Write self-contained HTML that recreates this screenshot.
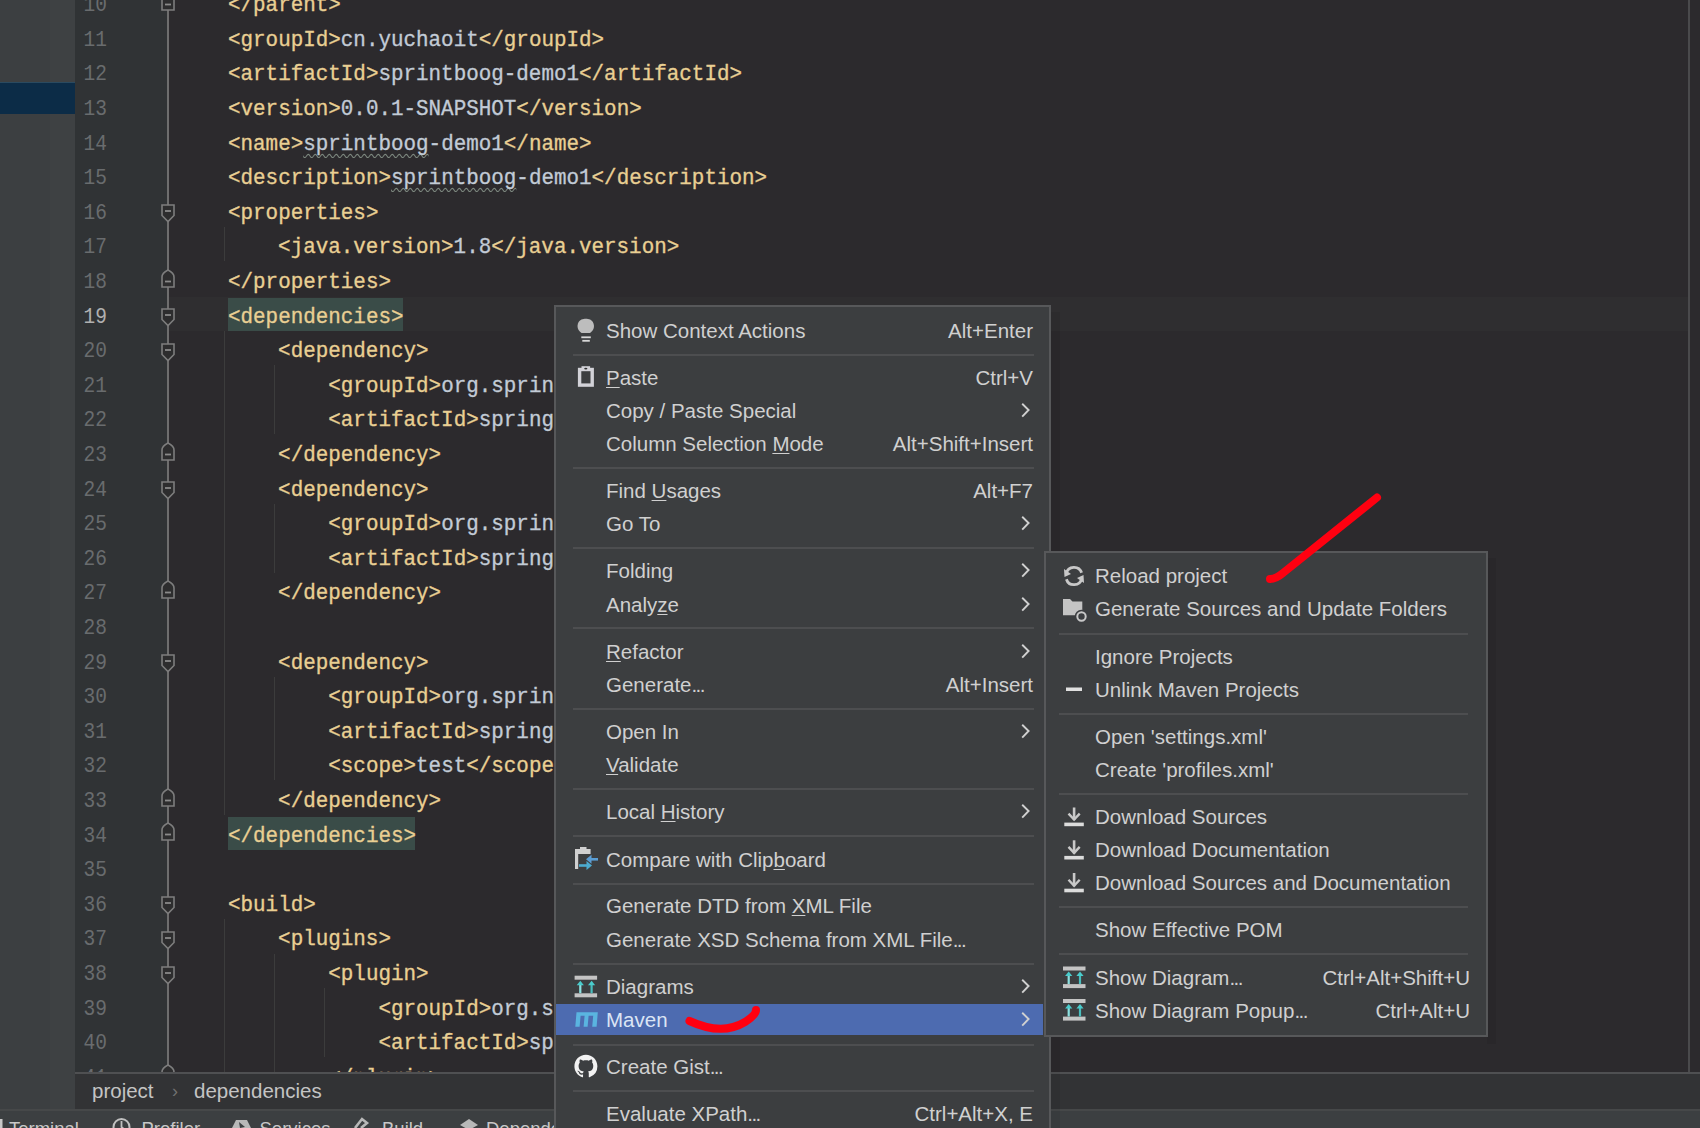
<!DOCTYPE html>
<html><head><meta charset="utf-8"><style>
*{margin:0;padding:0;box-sizing:border-box}
html,body{width:1700px;height:1128px;overflow:hidden;background:#2c2a2d}
body{position:relative;font-family:"Liberation Sans",sans-serif}
.abs{position:absolute}
.code{position:absolute;font-family:"Liberation Mono",monospace;font-size:20.9px;line-height:34.6px;height:34.6px;white-space:pre;transform:scaleY(1.07);transform-origin:0 22.86px}
.code{-webkit-text-stroke:0.3px currentColor}.t{color:#e9cf93}.v{color:#c2cbd6}.w{color:#c2cbd6;text-decoration:underline wavy #7d887f;text-decoration-thickness:1px;text-underline-offset:3px;text-decoration-skip-ink:none}
.ln{position:absolute;left:70px;width:37px;text-align:right;font-family:"Liberation Mono",monospace;font-size:19.5px;color:#606366;line-height:34.6px;height:34.6px;transform:scaleY(1.1);transform-origin:0 22.6px}
.menu{position:absolute;background:#3c3e41;border:2px solid #4f5052;}
.mi{position:absolute;left:0;right:0;height:33px;font-size:20.5px;color:#cfcfcf;line-height:33px}
.mi .tx{position:absolute;top:0}
.mi .sc{position:absolute;top:0;text-align:right}
.sep{position:absolute;height:2px;background:#4c4d4f}
.u{text-decoration:underline;text-underline-offset:2.2px;text-decoration-thickness:1.3px}
</style></head><body>

<div class="abs" style="left:0;top:0;width:75px;height:1128px;background:#3c3f41"></div>
<div class="abs" style="left:50px;top:0;width:25px;height:1110px;background:#3e4143"></div>
<div class="abs" style="left:0;top:81.5px;width:75px;height:32px;background:#0c2c47;border-top:1px solid #2a4a60"></div>
<div class="abs" style="left:75px;top:0;width:93px;height:1072px;background:#303335"></div>
<div class="abs" style="left:168px;top:296.9px;width:1521px;height:34px;background:#2f2e30"></div>
<div class="abs" style="left:1688px;top:0;width:2px;height:1072px;background:#4a4a4c"></div>
<div class="abs" style="left:167px;top:0;width:1.6px;height:1072px;background:#6e6e6e"></div>
<div class="abs" style="left:228px;top:298.1px;width:175px;height:33px;background:#3a4c48"></div>
<div class="abs" style="left:228px;top:817.1px;width:187px;height:33px;background:#3a4c48"></div>
<div class="abs" style="left:224px;top:226.9px;width:1px;height:34.6px;background:#3c3c3c"></div>
<div class="abs" style="left:224px;top:330.7px;width:1px;height:484.4px;background:#3c3c3c"></div>
<div class="abs" style="left:274px;top:365.3px;width:1px;height:69.2px;background:#3c3c3c"></div>
<div class="abs" style="left:274px;top:503.7px;width:1px;height:69.2px;background:#3c3c3c"></div>
<div class="abs" style="left:274px;top:676.7px;width:1px;height:103.8px;background:#3c3c3c"></div>
<div class="abs" style="left:224px;top:918.9px;width:1px;height:173.0px;background:#3c3c3c"></div>
<div class="abs" style="left:274px;top:953.5px;width:1px;height:138.4px;background:#3c3c3c"></div>
<div class="abs" style="left:324px;top:988.1px;width:1px;height:69.2px;background:#3c3c3c"></div>
<div class="ln" style="top:-10.8px;color:#696c6e">10</div>
<div class="ln" style="top:23.8px;color:#696c6e">11</div>
<div class="ln" style="top:58.4px;color:#696c6e">12</div>
<div class="ln" style="top:93.0px;color:#696c6e">13</div>
<div class="ln" style="top:127.6px;color:#696c6e">14</div>
<div class="ln" style="top:162.2px;color:#696c6e">15</div>
<div class="ln" style="top:196.8px;color:#696c6e">16</div>
<div class="ln" style="top:231.4px;color:#696c6e">17</div>
<div class="ln" style="top:266.0px;color:#696c6e">18</div>
<div class="ln" style="top:300.6px;color:#b0b0b0">19</div>
<div class="ln" style="top:335.2px;color:#696c6e">20</div>
<div class="ln" style="top:369.8px;color:#696c6e">21</div>
<div class="ln" style="top:404.4px;color:#696c6e">22</div>
<div class="ln" style="top:439.0px;color:#696c6e">23</div>
<div class="ln" style="top:473.6px;color:#696c6e">24</div>
<div class="ln" style="top:508.2px;color:#696c6e">25</div>
<div class="ln" style="top:542.8px;color:#696c6e">26</div>
<div class="ln" style="top:577.4px;color:#696c6e">27</div>
<div class="ln" style="top:612.0px;color:#696c6e">28</div>
<div class="ln" style="top:646.6px;color:#696c6e">29</div>
<div class="ln" style="top:681.2px;color:#696c6e">30</div>
<div class="ln" style="top:715.8px;color:#696c6e">31</div>
<div class="ln" style="top:750.4px;color:#696c6e">32</div>
<div class="ln" style="top:785.0px;color:#696c6e">33</div>
<div class="ln" style="top:819.6px;color:#696c6e">34</div>
<div class="ln" style="top:854.2px;color:#696c6e">35</div>
<div class="ln" style="top:888.8px;color:#696c6e">36</div>
<div class="ln" style="top:923.4px;color:#696c6e">37</div>
<div class="ln" style="top:958.0px;color:#696c6e">38</div>
<div class="ln" style="top:992.6px;color:#696c6e">39</div>
<div class="ln" style="top:1027.2px;color:#696c6e">40</div>
<div class="ln" style="top:1061.8px;color:#696c6e">41</div>
<svg class="abs" style="left:160px;top:204.3px" width="16" height="20" viewBox="0 0 16 20"><path d="M2 1 H14 V11.5 L8 17.5 L2 11.5 Z" fill="#2d2d2e" stroke="#7d7d7d" stroke-width="1.6"/><path d="M5 7 H11" stroke="#8a8a8a" stroke-width="1.8"/></svg>
<svg class="abs" style="left:160px;top:308.1px" width="16" height="20" viewBox="0 0 16 20"><path d="M2 1 H14 V11.5 L8 17.5 L2 11.5 Z" fill="#2d2d2e" stroke="#7d7d7d" stroke-width="1.6"/><path d="M5 7 H11" stroke="#8a8a8a" stroke-width="1.8"/></svg>
<svg class="abs" style="left:160px;top:342.7px" width="16" height="20" viewBox="0 0 16 20"><path d="M2 1 H14 V11.5 L8 17.5 L2 11.5 Z" fill="#2d2d2e" stroke="#7d7d7d" stroke-width="1.6"/><path d="M5 7 H11" stroke="#8a8a8a" stroke-width="1.8"/></svg>
<svg class="abs" style="left:160px;top:481.1px" width="16" height="20" viewBox="0 0 16 20"><path d="M2 1 H14 V11.5 L8 17.5 L2 11.5 Z" fill="#2d2d2e" stroke="#7d7d7d" stroke-width="1.6"/><path d="M5 7 H11" stroke="#8a8a8a" stroke-width="1.8"/></svg>
<svg class="abs" style="left:160px;top:654.1px" width="16" height="20" viewBox="0 0 16 20"><path d="M2 1 H14 V11.5 L8 17.5 L2 11.5 Z" fill="#2d2d2e" stroke="#7d7d7d" stroke-width="1.6"/><path d="M5 7 H11" stroke="#8a8a8a" stroke-width="1.8"/></svg>
<svg class="abs" style="left:160px;top:896.3px" width="16" height="20" viewBox="0 0 16 20"><path d="M2 1 H14 V11.5 L8 17.5 L2 11.5 Z" fill="#2d2d2e" stroke="#7d7d7d" stroke-width="1.6"/><path d="M5 7 H11" stroke="#8a8a8a" stroke-width="1.8"/></svg>
<svg class="abs" style="left:160px;top:930.9px" width="16" height="20" viewBox="0 0 16 20"><path d="M2 1 H14 V11.5 L8 17.5 L2 11.5 Z" fill="#2d2d2e" stroke="#7d7d7d" stroke-width="1.6"/><path d="M5 7 H11" stroke="#8a8a8a" stroke-width="1.8"/></svg>
<svg class="abs" style="left:160px;top:965.5px" width="16" height="20" viewBox="0 0 16 20"><path d="M2 1 H14 V11.5 L8 17.5 L2 11.5 Z" fill="#2d2d2e" stroke="#7d7d7d" stroke-width="1.6"/><path d="M5 7 H11" stroke="#8a8a8a" stroke-width="1.8"/></svg>
<svg class="abs" style="left:160px;top:-8.3px" width="16" height="20" viewBox="0 0 16 20"><path d="M2 18 H14 V8 Q14 4 8 1 Q2 4 2 8 Z" fill="#2d2d2e" stroke="#7d7d7d" stroke-width="1.6"/><path d="M5 12.5 H11" stroke="#8a8a8a" stroke-width="1.8"/></svg>
<svg class="abs" style="left:160px;top:268.5px" width="16" height="20" viewBox="0 0 16 20"><path d="M2 18 H14 V8 Q14 4 8 1 Q2 4 2 8 Z" fill="#2d2d2e" stroke="#7d7d7d" stroke-width="1.6"/><path d="M5 12.5 H11" stroke="#8a8a8a" stroke-width="1.8"/></svg>
<svg class="abs" style="left:160px;top:441.5px" width="16" height="20" viewBox="0 0 16 20"><path d="M2 18 H14 V8 Q14 4 8 1 Q2 4 2 8 Z" fill="#2d2d2e" stroke="#7d7d7d" stroke-width="1.6"/><path d="M5 12.5 H11" stroke="#8a8a8a" stroke-width="1.8"/></svg>
<svg class="abs" style="left:160px;top:579.9px" width="16" height="20" viewBox="0 0 16 20"><path d="M2 18 H14 V8 Q14 4 8 1 Q2 4 2 8 Z" fill="#2d2d2e" stroke="#7d7d7d" stroke-width="1.6"/><path d="M5 12.5 H11" stroke="#8a8a8a" stroke-width="1.8"/></svg>
<svg class="abs" style="left:160px;top:787.5px" width="16" height="20" viewBox="0 0 16 20"><path d="M2 18 H14 V8 Q14 4 8 1 Q2 4 2 8 Z" fill="#2d2d2e" stroke="#7d7d7d" stroke-width="1.6"/><path d="M5 12.5 H11" stroke="#8a8a8a" stroke-width="1.8"/></svg>
<svg class="abs" style="left:160px;top:822.1px" width="16" height="20" viewBox="0 0 16 20"><path d="M2 18 H14 V8 Q14 4 8 1 Q2 4 2 8 Z" fill="#2d2d2e" stroke="#7d7d7d" stroke-width="1.6"/><path d="M5 12.5 H11" stroke="#8a8a8a" stroke-width="1.8"/></svg>
<svg class="abs" style="left:160px;top:1064.3px" width="16" height="20" viewBox="0 0 16 20"><path d="M2 18 H14 V8 Q14 4 8 1 Q2 4 2 8 Z" fill="#2d2d2e" stroke="#7d7d7d" stroke-width="1.6"/><path d="M5 12.5 H11" stroke="#8a8a8a" stroke-width="1.8"/></svg>
<div class="code" style="left:228.0px;top:-10.9px"><span class="t">&lt;/parent&gt;</span></div>
<div class="code" style="left:228.0px;top:23.7px"><span class="t">&lt;groupId&gt;</span><span class="v">cn.yuchaoit</span><span class="t">&lt;/groupId&gt;</span></div>
<div class="code" style="left:228.0px;top:58.3px"><span class="t">&lt;artifactId&gt;</span><span class="v">sprintboog-demo1</span><span class="t">&lt;/artifactId&gt;</span></div>
<div class="code" style="left:228.0px;top:92.9px"><span class="t">&lt;version&gt;</span><span class="v">0.0.1-SNAPSHOT</span><span class="t">&lt;/version&gt;</span></div>
<div class="code" style="left:228.0px;top:127.5px"><span class="t">&lt;name&gt;</span><span class="w">sprintboog</span><span class="v">-demo1</span><span class="t">&lt;/name&gt;</span></div>
<div class="code" style="left:228.0px;top:162.1px"><span class="t">&lt;description&gt;</span><span class="w">sprintboog</span><span class="v">-demo1</span><span class="t">&lt;/description&gt;</span></div>
<div class="code" style="left:228.0px;top:196.7px"><span class="t">&lt;properties&gt;</span></div>
<div class="code" style="left:278.1px;top:231.3px"><span class="t">&lt;java.version&gt;</span><span class="v">1.8</span><span class="t">&lt;/java.version&gt;</span></div>
<div class="code" style="left:228.0px;top:265.9px"><span class="t">&lt;/properties&gt;</span></div>
<div class="code" style="left:228.0px;top:300.5px"><span class="t">&lt;dependencies&gt;</span></div>
<div class="code" style="left:278.1px;top:335.1px"><span class="t">&lt;dependency&gt;</span></div>
<div class="code" style="left:328.3px;top:369.7px"><span class="t">&lt;groupId&gt;</span><span class="v">org.springframework.boot</span><span class="t">&lt;/groupId&gt;</span></div>
<div class="code" style="left:328.3px;top:404.3px"><span class="t">&lt;artifactId&gt;</span><span class="v">spring-boot-starter-web</span><span class="t">&lt;/artifactId&gt;</span></div>
<div class="code" style="left:278.1px;top:438.9px"><span class="t">&lt;/dependency&gt;</span></div>
<div class="code" style="left:278.1px;top:473.5px"><span class="t">&lt;dependency&gt;</span></div>
<div class="code" style="left:328.3px;top:508.1px"><span class="t">&lt;groupId&gt;</span><span class="v">org.springframework.boot</span><span class="t">&lt;/groupId&gt;</span></div>
<div class="code" style="left:328.3px;top:542.7px"><span class="t">&lt;artifactId&gt;</span><span class="v">spring-boot-devtools</span><span class="t">&lt;/artifactId&gt;</span></div>
<div class="code" style="left:278.1px;top:577.3px"><span class="t">&lt;/dependency&gt;</span></div>
<div class="code" style="left:278.1px;top:646.5px"><span class="t">&lt;dependency&gt;</span></div>
<div class="code" style="left:328.3px;top:681.1px"><span class="t">&lt;groupId&gt;</span><span class="v">org.springframework.boot</span><span class="t">&lt;/groupId&gt;</span></div>
<div class="code" style="left:328.3px;top:715.7px"><span class="t">&lt;artifactId&gt;</span><span class="v">spring-boot-starter-test</span><span class="t">&lt;/artifactId&gt;</span></div>
<div class="code" style="left:328.3px;top:750.3px"><span class="t">&lt;scope&gt;</span><span class="v">test</span><span class="t">&lt;/scope&gt;</span></div>
<div class="code" style="left:278.1px;top:784.9px"><span class="t">&lt;/dependency&gt;</span></div>
<div class="code" style="left:228.0px;top:819.5px"><span class="t">&lt;/dependencies&gt;</span></div>
<div class="code" style="left:228.0px;top:888.7px"><span class="t">&lt;build&gt;</span></div>
<div class="code" style="left:278.1px;top:923.3px"><span class="t">&lt;plugins&gt;</span></div>
<div class="code" style="left:328.3px;top:957.9px"><span class="t">&lt;plugin&gt;</span></div>
<div class="code" style="left:378.4px;top:992.5px"><span class="t">&lt;groupId&gt;</span><span class="v">org.springframework.boot</span><span class="t">&lt;/groupId&gt;</span></div>
<div class="code" style="left:378.4px;top:1027.1px"><span class="t">&lt;artifactId&gt;</span><span class="v">spring-boot-maven-plugin</span><span class="t">&lt;/artifactId&gt;</span></div>
<div class="code" style="left:328.3px;top:1061.7px"><span class="t">&lt;/plugin&gt;</span></div>
<div class="abs" style="left:75px;top:1072px;width:1625px;height:38px;background:#323335;border-top:2px solid #4f5052"></div>
<div class="abs" style="left:92px;top:1074px;font-size:20.5px;line-height:34px;color:#c4c4c4">project</div>
<div class="abs" style="left:172px;top:1074px;font-size:18px;line-height:34px;color:#707070">&#8250;</div>
<div class="abs" style="left:194px;top:1074px;font-size:20.5px;line-height:34px;color:#c4c4c4">dependencies</div>
<div class="abs" style="left:0;top:1109px;width:1700px;height:19px;background:#3c3f41"></div>
<div class="abs" style="left:0;top:1109px;width:1700px;height:1.5px;background:#464849"></div>
<div class="abs" style="left:9.0px;top:1111.5px;height:33px;line-height:33px;font-size:18.5px;color:#c8c8c8;white-space:pre">Terminal</div>
<div class="abs" style="left:141.5px;top:1111.5px;height:33px;line-height:33px;font-size:18.5px;color:#c8c8c8;white-space:pre">Profiler</div>
<div class="abs" style="left:259.5px;top:1111.5px;height:33px;line-height:33px;font-size:18.5px;color:#c8c8c8;white-space:pre">Services</div>
<div class="abs" style="left:382.0px;top:1111.5px;height:33px;line-height:33px;font-size:18.5px;color:#c8c8c8;white-space:pre">Build</div>
<div class="abs" style="left:486.0px;top:1111.5px;height:33px;line-height:33px;font-size:18.5px;color:#c8c8c8;white-space:pre">Dependencies</div>
<svg class="abs" style="left:0;top:1100px" width="560" height="28"><rect x="0" y="19" width="2.5" height="9" fill="#c8c8c8"/><circle cx="121.5" cy="27" r="8" fill="none" stroke="#c0c0c0" stroke-width="2"/><path d="M121.5 21 V27 L125 30" fill="none" stroke="#c0c0c0" stroke-width="1.8"/><path d="M232 28 L236 20 H247 L251 28 Z" fill="#b8b8b8"/><path d="M239 22 L245 27 L240 28 Z" fill="#3c3f41"/><path d="M355 28 L362 19 L367 23 L361 28" fill="none" stroke="#b8b8b8" stroke-width="2.6"/><path d="M460 25 L469 19 L478 25 L469 30 Z" fill="#b8b8b8"/></svg>
<div class="menu" style="left:554px;top:305px;width:497px;height:900px"></div>
<div class="abs" style="left:1050px;top:312px;width:10px;height:816px;background:rgba(0,0,0,0.05)"></div>
<div class="abs" style="left:554px;top:305px;width:497px;height:823px;background:#3c3e40;border:2px solid #57585a;border-bottom:none"></div>
<div class="abs" style="left:556px;top:1004px;width:487px;height:31px;background:#4d6bb0"></div>
<div class="abs" style="left:606px;top:313.6px;height:33px;line-height:33px;font-size:20.5px;color:#d0d0d0;white-space:pre">Show Context Actions</div>
<div class="abs" style="left:633px;width:400px;text-align:right;top:313.6px;height:33px;line-height:33px;font-size:20.5px;color:#d0d0d0;white-space:pre">Alt+Enter</div>
<div class="abs" style="left:573px;top:353.5px;width:461px;height:2px;background:#4d4e50"></div>
<div class="abs" style="left:606px;top:360.6px;height:33px;line-height:33px;font-size:20.5px;color:#d0d0d0;white-space:pre"><span class="u">P</span>aste</div>
<div class="abs" style="left:633px;width:400px;text-align:right;top:360.6px;height:33px;line-height:33px;font-size:20.5px;color:#d0d0d0;white-space:pre">Ctrl+V</div>
<div class="abs" style="left:606px;top:393.6px;height:33px;line-height:33px;font-size:20.5px;color:#d0d0d0;white-space:pre">Copy / Paste Special</div>
<svg class="abs" style="left:1020.3px;top:401.6px" width="12" height="18" viewBox="0 0 12 18"><path d="M2.2 1.8 L8.6 8 L2.2 14.6" fill="none" stroke="#d0d0d0" stroke-width="1.9"/></svg>
<div class="abs" style="left:606px;top:426.6px;height:33px;line-height:33px;font-size:20.5px;color:#d0d0d0;white-space:pre">Column Selection <span class="u">M</span>ode</div>
<div class="abs" style="left:633px;width:400px;text-align:right;top:426.6px;height:33px;line-height:33px;font-size:20.5px;color:#d0d0d0;white-space:pre">Alt+Shift+Insert</div>
<div class="abs" style="left:573px;top:466.5px;width:461px;height:2px;background:#4d4e50"></div>
<div class="abs" style="left:606px;top:473.6px;height:33px;line-height:33px;font-size:20.5px;color:#d0d0d0;white-space:pre">Find <span class="u">U</span>sages</div>
<div class="abs" style="left:633px;width:400px;text-align:right;top:473.6px;height:33px;line-height:33px;font-size:20.5px;color:#d0d0d0;white-space:pre">Alt+F7</div>
<div class="abs" style="left:606px;top:506.6px;height:33px;line-height:33px;font-size:20.5px;color:#d0d0d0;white-space:pre">Go To</div>
<svg class="abs" style="left:1020.3px;top:514.6px" width="12" height="18" viewBox="0 0 12 18"><path d="M2.2 1.8 L8.6 8 L2.2 14.6" fill="none" stroke="#d0d0d0" stroke-width="1.9"/></svg>
<div class="abs" style="left:573px;top:546.5px;width:461px;height:2px;background:#4d4e50"></div>
<div class="abs" style="left:606px;top:553.6px;height:33px;line-height:33px;font-size:20.5px;color:#d0d0d0;white-space:pre">Folding</div>
<svg class="abs" style="left:1020.3px;top:561.6px" width="12" height="18" viewBox="0 0 12 18"><path d="M2.2 1.8 L8.6 8 L2.2 14.6" fill="none" stroke="#d0d0d0" stroke-width="1.9"/></svg>
<div class="abs" style="left:606px;top:587.6px;height:33px;line-height:33px;font-size:20.5px;color:#d0d0d0;white-space:pre">Analy<span class="u">z</span>e</div>
<svg class="abs" style="left:1020.3px;top:595.6px" width="12" height="18" viewBox="0 0 12 18"><path d="M2.2 1.8 L8.6 8 L2.2 14.6" fill="none" stroke="#d0d0d0" stroke-width="1.9"/></svg>
<div class="abs" style="left:573px;top:626.5px;width:461px;height:2px;background:#4d4e50"></div>
<div class="abs" style="left:606px;top:634.6px;height:33px;line-height:33px;font-size:20.5px;color:#d0d0d0;white-space:pre"><span class="u">R</span>efactor</div>
<svg class="abs" style="left:1020.3px;top:642.6px" width="12" height="18" viewBox="0 0 12 18"><path d="M2.2 1.8 L8.6 8 L2.2 14.6" fill="none" stroke="#d0d0d0" stroke-width="1.9"/></svg>
<div class="abs" style="left:606px;top:667.6px;height:33px;line-height:33px;font-size:20.5px;color:#d0d0d0;white-space:pre">Generate<span style="letter-spacing:-1.6px">..</span>.</div>
<div class="abs" style="left:633px;width:400px;text-align:right;top:667.6px;height:33px;line-height:33px;font-size:20.5px;color:#d0d0d0;white-space:pre">Alt+Insert</div>
<div class="abs" style="left:573px;top:707.5px;width:461px;height:2px;background:#4d4e50"></div>
<div class="abs" style="left:606px;top:714.6px;height:33px;line-height:33px;font-size:20.5px;color:#d0d0d0;white-space:pre">Open In</div>
<svg class="abs" style="left:1020.3px;top:722.6px" width="12" height="18" viewBox="0 0 12 18"><path d="M2.2 1.8 L8.6 8 L2.2 14.6" fill="none" stroke="#d0d0d0" stroke-width="1.9"/></svg>
<div class="abs" style="left:606px;top:747.6px;height:33px;line-height:33px;font-size:20.5px;color:#d0d0d0;white-space:pre"><span class="u">V</span>alidate</div>
<div class="abs" style="left:573px;top:787.5px;width:461px;height:2px;background:#4d4e50"></div>
<div class="abs" style="left:606px;top:795.4px;height:33px;line-height:33px;font-size:20.5px;color:#d0d0d0;white-space:pre">Local <span class="u">H</span>istory</div>
<svg class="abs" style="left:1020.3px;top:803.4px" width="12" height="18" viewBox="0 0 12 18"><path d="M2.2 1.8 L8.6 8 L2.2 14.6" fill="none" stroke="#d0d0d0" stroke-width="1.9"/></svg>
<div class="abs" style="left:573px;top:834.5px;width:461px;height:2px;background:#4d4e50"></div>
<div class="abs" style="left:606px;top:842.6px;height:33px;line-height:33px;font-size:20.5px;color:#d0d0d0;white-space:pre">Compare with Clip<span class="u">b</span>oard</div>
<div class="abs" style="left:573px;top:882.5px;width:461px;height:2px;background:#4d4e50"></div>
<div class="abs" style="left:606px;top:888.6px;height:33px;line-height:33px;font-size:20.5px;color:#d0d0d0;white-space:pre">Generate DTD from <span class="u">X</span>ML File</div>
<div class="abs" style="left:606px;top:922.6px;height:33px;line-height:33px;font-size:20.5px;color:#d0d0d0;white-space:pre">Generate XSD Schema from XML File<span style="letter-spacing:-1.6px">..</span>.</div>
<div class="abs" style="left:573px;top:962.5px;width:461px;height:2px;background:#4d4e50"></div>
<div class="abs" style="left:606px;top:969.6px;height:33px;line-height:33px;font-size:20.5px;color:#d0d0d0;white-space:pre">Diagrams</div>
<svg class="abs" style="left:1020.3px;top:977.6px" width="12" height="18" viewBox="0 0 12 18"><path d="M2.2 1.8 L8.6 8 L2.2 14.6" fill="none" stroke="#d0d0d0" stroke-width="1.9"/></svg>
<div class="abs" style="left:606px;top:1002.6px;height:33px;line-height:33px;font-size:20.5px;color:#dbe5f5;white-space:pre">Maven</div>
<svg class="abs" style="left:1020.3px;top:1010.6px" width="12" height="18" viewBox="0 0 12 18"><path d="M2.2 1.8 L8.6 8 L2.2 14.6" fill="none" stroke="#d0d0d0" stroke-width="1.9"/></svg>
<div class="abs" style="left:573px;top:1044.0px;width:461px;height:2px;background:#4d4e50"></div>
<div class="abs" style="left:606px;top:1049.6px;height:33px;line-height:33px;font-size:20.5px;color:#d0d0d0;white-space:pre">Create Gist<span style="letter-spacing:-1.6px">..</span>.</div>
<div class="abs" style="left:573px;top:1089.5px;width:461px;height:2px;background:#4d4e50"></div>
<div class="abs" style="left:606px;top:1096.6px;height:33px;line-height:33px;font-size:20.5px;color:#d0d0d0;white-space:pre">Evaluate XPath<span style="letter-spacing:-1.6px">..</span>.</div>
<div class="abs" style="left:633px;width:400px;text-align:right;top:1096.6px;height:33px;line-height:33px;font-size:20.5px;color:#d0d0d0;white-space:pre">Ctrl+Alt+X, E</div>
<div class="abs" style="left:1487px;top:558px;width:9px;height:486px;background:rgba(0,0,0,0.05)"></div>
<div class="abs" style="left:1044px;top:551px;width:444px;height:486px;background:#3c3e40;border:2px solid #57585a"></div>
<div class="abs" style="left:1095px;top:558.6px;height:33px;line-height:33px;font-size:20.5px;color:#d0d0d0;white-space:pre">Reload project</div>
<div class="abs" style="left:1095px;top:591.6px;height:33px;line-height:33px;font-size:20.5px;color:#d0d0d0;white-space:pre">Generate Sources and Update Folders</div>
<div class="abs" style="left:1059px;top:632.5px;width:409px;height:2px;background:#4d4e50"></div>
<div class="abs" style="left:1095px;top:639.6px;height:33px;line-height:33px;font-size:20.5px;color:#d0d0d0;white-space:pre">Ignore Projects</div>
<div class="abs" style="left:1095px;top:672.6px;height:33px;line-height:33px;font-size:20.5px;color:#d0d0d0;white-space:pre">Unlink Maven Projects</div>
<div class="abs" style="left:1059px;top:712.5px;width:409px;height:2px;background:#4d4e50"></div>
<div class="abs" style="left:1095px;top:719.6px;height:33px;line-height:33px;font-size:20.5px;color:#d0d0d0;white-space:pre">Open &#x27;settings.xml&#x27;</div>
<div class="abs" style="left:1095px;top:752.6px;height:33px;line-height:33px;font-size:20.5px;color:#d0d0d0;white-space:pre">Create &#x27;profiles.xml&#x27;</div>
<div class="abs" style="left:1059px;top:792.5px;width:409px;height:2px;background:#4d4e50"></div>
<div class="abs" style="left:1095px;top:799.6px;height:33px;line-height:33px;font-size:20.5px;color:#d0d0d0;white-space:pre">Download Sources</div>
<div class="abs" style="left:1095px;top:832.6px;height:33px;line-height:33px;font-size:20.5px;color:#d0d0d0;white-space:pre">Download Documentation</div>
<div class="abs" style="left:1095px;top:865.6px;height:33px;line-height:33px;font-size:20.5px;color:#d0d0d0;white-space:pre">Download Sources and Documentation</div>
<div class="abs" style="left:1059px;top:906.0px;width:409px;height:2px;background:#4d4e50"></div>
<div class="abs" style="left:1095px;top:912.6px;height:33px;line-height:33px;font-size:20.5px;color:#d0d0d0;white-space:pre">Show Effective POM</div>
<div class="abs" style="left:1059px;top:952.5px;width:409px;height:2px;background:#4d4e50"></div>
<div class="abs" style="left:1095px;top:960.6px;height:33px;line-height:33px;font-size:20.5px;color:#d0d0d0;white-space:pre">Show Diagram<span style="letter-spacing:-1.6px">..</span>.</div>
<div class="abs" style="left:1070px;width:400px;text-align:right;top:960.6px;height:33px;line-height:33px;font-size:20.5px;color:#d0d0d0;white-space:pre">Ctrl+Alt+Shift+U</div>
<div class="abs" style="left:1095px;top:993.6px;height:33px;line-height:33px;font-size:20.5px;color:#d0d0d0;white-space:pre">Show Diagram Popup<span style="letter-spacing:-1.6px">..</span>.</div>
<div class="abs" style="left:1070px;width:400px;text-align:right;top:993.6px;height:33px;line-height:33px;font-size:20.5px;color:#d0d0d0;white-space:pre">Ctrl+Alt+U</div>
<svg class="abs" style="left:0;top:0" width="1700" height="1128"><path d="M581.5 333 C577 330 577.2 326 578 323.5 C579.5 319.5 583 318.8 585.8 318.8 C588.6 318.8 592 319.5 593.5 323.5 C594.3 326 594.5 330 590 333 Z" fill="#bdbdbd"/><rect x="581.3" y="336.4" width="9.5" height="1.8" fill="#d8d8d8"/><rect x="582.3" y="339.9" width="7.5" height="1.8" fill="#d8d8d8"/><rect x="579.6" y="369.5" width="12.6" height="15.6" fill="none" stroke="#d2d2d8" stroke-width="3.4"/><rect x="581.5" y="366.2" width="8.6" height="3.5" fill="#d2d2d8"/><ellipse cx="585.8" cy="368.6" rx="1.6" ry="0.9" fill="#303030"/><rect x="575" y="849" width="3.2" height="20" fill="#d0d0d0"/><rect x="575" y="849" width="15.6" height="5" fill="#d0d0d0"/><rect x="580" y="847" width="6.5" height="3" fill="#d0d0d0"/><rect x="590" y="858" width="8" height="2.6" fill="#5b9dd3"/><path d="M586 859.3 L591.5 854.8 V863.8 Z" fill="#5b9dd3"/><rect x="579" y="864.2" width="8" height="2.6" fill="#4cabd0"/><path d="M592 865.5 L586.5 861 V870 Z" fill="#4cabd0"/><rect x="574.6" y="975.7" width="22.5" height="4" fill="#c4c4c4"/><rect x="574.6" y="993.3" width="22.5" height="4" fill="#c4c4c4"/><rect x="579.2" y="984.2" width="2.2" height="9" fill="#8ce0e0"/><path d="M580.3 980.7 l3.6 4.5 h-7.2 z" fill="#49cccc"/><rect x="590.5" y="984.2" width="2.2" height="9" fill="#49bdbd"/><path d="M591.6 980.7 l3.6 4.5 h-7.2 z" fill="#49cccc"/><path d="M575.3 1026.7 L576.5 1012.3 H597.8 L596.6 1026.7 H592.2 L593.2 1015.8 H588.6 L587.6 1026.7 H583.6 L584.6 1015.8 H580.6 L579.6 1026.7 Z" fill="#5ab4e0"/><g transform="translate(574.4 1054.8) scale(1.4375)"><circle cx="8" cy="8" r="8" fill="#3c3e41"/><path d="M8 0C3.58 0 0 3.58 0 8c0 3.54 2.29 6.53 5.47 7.59.4.07.55-.17.55-.38 0-.19-.01-.82-.01-1.49-2.01.37-2.53-.49-2.69-.94-.09-.23-.48-.94-.82-1.13-.28-.15-.68-.52-.01-.53.63-.01 1.08.58 1.23.82.72 1.21 1.870.87 2.33.66.07-.52.28-.87.51-1.07-1.78-.2-3.64-.89-3.64-3.95 0-.87.31-1.59.82-2.150-.08-.2-.36-1.02.08-2.12 0 0 .67-.21 2.2.82.64-.18 1.32-.27 2-.27.68 0 1.36.09 2 .27 1.53-1.04 2.2-.82 2.2-.82.44 1.1.16 1.92.08 2.12.51.56.82 1.27.82 2.15 0 3.07-1.87 3.75-3.65 3.95.29.25.54.73.54 1.48 0 1.07-.01 1.93-.01 2.2 0 .21.15.46.55.38A8.013 8.013 0 0016 8c0-4.42-3.58-8-8-8z" fill="#f2f2f2"/></g><path d="M1066.2 573.5 A8 8 0 0 1 1081.6 572.8" fill="none" stroke="#c8c8c8" stroke-width="2.8"/><path d="M1064 569 L1064.5 577 L1071 574 Z" fill="#c8c8c8"/><path d="M1081.8 578.5 A8 8 0 0 1 1066.4 579.2" fill="none" stroke="#c8c8c8" stroke-width="2.8"/><path d="M1084 583 L1083.5 575 L1077 578 Z" fill="#c8c8c8"/><path d="M1063 599 H1070 L1072.5 601.5 H1082.3 V615.2 H1063 Z" fill="#c4c4c4"/><circle cx="1081.5" cy="616.5" r="6.8" fill="#3c3e41"/><circle cx="1081.5" cy="616.5" r="4.2" fill="none" stroke="#c8c8c8" stroke-width="2"/><rect x="1066" y="687.5" width="16" height="3.5" fill="#e0e0e0"/><rect x="1072.8" y="807.5" width="2.6" height="12.6" fill="#c9c9c9"/><path d="M1068.5 813.6 L1074.1 819.6 L1079.7 813.6" fill="none" stroke="#c9c9c9" stroke-width="2.4"/><rect x="1064.3" y="822.6" width="19.5" height="3.6" fill="#dcdcdc"/><rect x="1072.8" y="840.3" width="2.6" height="13.1" fill="#c9c9c9"/><path d="M1068.5 846.9 L1074.1 852.9 L1079.7 846.9" fill="none" stroke="#c9c9c9" stroke-width="2.4"/><rect x="1064.3" y="855.9" width="19.5" height="3.6" fill="#dcdcdc"/><rect x="1072.8" y="873.0" width="2.6" height="13.2" fill="#c9c9c9"/><path d="M1068.5 879.7 L1074.1 885.7 L1079.7 879.7" fill="none" stroke="#c9c9c9" stroke-width="2.4"/><rect x="1064.3" y="888.7" width="19.5" height="3.6" fill="#dcdcdc"/><rect x="1063.0" y="966.5" width="22.5" height="4" fill="#c4c4c4"/><rect x="1063.0" y="984.1" width="22.5" height="4" fill="#c4c4c4"/><rect x="1067.6" y="975.0" width="2.2" height="9" fill="#8ce0e0"/><path d="M1068.7 971.5 l3.6 4.5 h-7.2 z" fill="#49cccc"/><rect x="1078.9" y="975.0" width="2.2" height="9" fill="#49bdbd"/><path d="M1080.0 971.5 l3.6 4.5 h-7.2 z" fill="#49cccc"/><rect x="1063.0" y="999.0" width="22.5" height="4" fill="#c4c4c4"/><rect x="1063.0" y="1016.6" width="22.5" height="4" fill="#c4c4c4"/><rect x="1067.6" y="1007.5" width="2.2" height="9" fill="#8ce0e0"/><path d="M1068.7 1004.0 l3.6 4.5 h-7.2 z" fill="#49cccc"/><rect x="1078.9" y="1007.5" width="2.2" height="9" fill="#49bdbd"/><path d="M1080.0 1004.0 l3.6 4.5 h-7.2 z" fill="#49cccc"/></svg>
<svg class="abs" style="left:0;top:0" width="1700" height="1128"><path d="M1377 497.5 L1283 573 Q1276 579 1270 579" fill="none" stroke="#ff0010" stroke-width="8" stroke-linecap="round" stroke-linejoin="round"/><path d="M689.5 1021 Q722 1036 745 1022 Q756 1015 756 1010" fill="none" stroke="#ff0010" stroke-width="8" stroke-linecap="round"/></svg>
</body></html>
